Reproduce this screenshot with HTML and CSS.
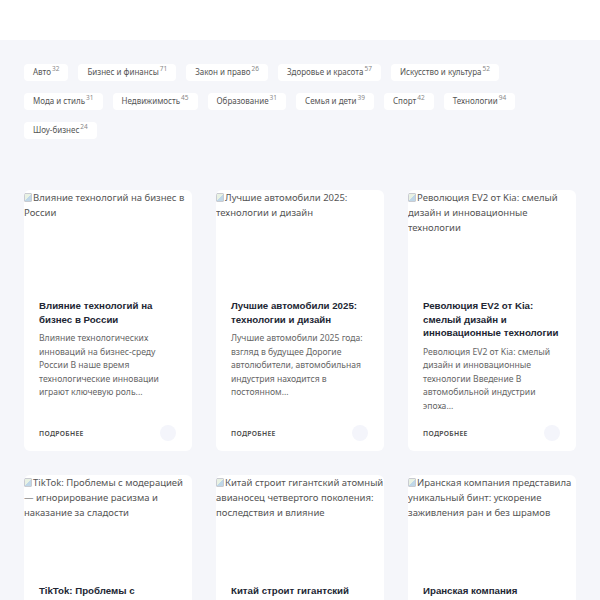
FILE: index.html
```html
<!DOCTYPE html>
<html lang="ru">
<head>
    <meta charset="UTF-8">
    <meta name="viewport" content="width=device-width, initial-scale=1.0">
    <title>Новости</title>
    <link rel="stylesheet" href="styles.css">
</head>
<body>
    <header class="topbar"></header>

    <main class="page">
        <div class="tags">
            <a class="tag" href="#">Авто<sup>32</sup></a>
            <a class="tag" href="#">Бизнес и финансы<sup>71</sup></a>
            <a class="tag" href="#">Закон и право<sup>26</sup></a>
            <a class="tag" href="#">Здоровье и красота<sup>57</sup></a>
            <a class="tag" href="#">Искусство и культура<sup>52</sup></a>
            <a class="tag" href="#">Мода и стиль<sup>31</sup></a>
            <a class="tag" href="#">Недвижимость<sup>45</sup></a>
            <a class="tag" href="#">Образование<sup>31</sup></a>
            <a class="tag" href="#">Семья и дети<sup>39</sup></a>
            <a class="tag" href="#">Спорт<sup>42</sup></a>
            <a class="tag" href="#">Технологии<sup>94</sup></a>
            <a class="tag" href="#">Шоу-бизнес<sup>24</sup></a>
        </div>

        <div class="grid">
            <article class="card">
                <div class="card-img"><span class="broken"></span>Влияние технологий на бизнес в России</div>
                <div class="card-body">
                    <h3>Влияние технологий на бизнес в России</h3>
                    <p>Влияние технологических инноваций на бизнес-среду России В наше время технологические инновации играют ключевую роль...</p>
                    <div class="card-foot">
                        <a href="#" class="more">Подробнее</a>
                        <span class="dot"></span>
                    </div>
                </div>
            </article>
            <article class="card">
                <div class="card-img"><span class="broken"></span>Лучшие автомобили 2025: технологии и дизайн</div>
                <div class="card-body">
                    <h3>Лучшие автомобили 2025: технологии и дизайн</h3>
                    <p>Лучшие автомобили 2025 года: взгляд в будущее Дорогие автолюбители, автомобильная индустрия находится в постоянном...</p>
                    <div class="card-foot">
                        <a href="#" class="more">Подробнее</a>
                        <span class="dot"></span>
                    </div>
                </div>
            </article>
            <article class="card">
                <div class="card-img"><span class="broken"></span>Революция EV2 от Kia: смелый дизайн и инновационные технологии</div>
                <div class="card-body">
                    <h3>Революция EV2 от Kia: смелый дизайн и инновационные технологии</h3>
                    <p>Революция EV2 от Kia: смелый дизайн и инновационные технологии Введение В автомобильной индустрии эпоха...</p>
                    <div class="card-foot">
                        <a href="#" class="more">Подробнее</a>
                        <span class="dot"></span>
                    </div>
                </div>
            </article>
            <article class="card">
                <div class="card-img"><span class="broken"></span>TikTok: Проблемы с модерацией — игнорирование расизма и наказание за сладости</div>
                <div class="card-body">
                    <h3>TikTok: Проблемы с модерацией — игнорирование расизма и наказание за сладости</h3>
                    <p>TikTok: Проблемы с модерацией...</p>
                    <div class="card-foot">
                        <a href="#" class="more">Подробнее</a>
                        <span class="dot"></span>
                    </div>
                </div>
            </article>
            <article class="card">
                <div class="card-img"><span class="broken"></span>Китай строит гигантский атомный авианосец четвертого поколения: последствия и влияние</div>
                <div class="card-body">
                    <h3>Китай строит гигантский атомный авианосец четвертого поколения</h3>
                    <p>Китай строит гигантский атомный авианосец...</p>
                    <div class="card-foot">
                        <a href="#" class="more">Подробнее</a>
                        <span class="dot"></span>
                    </div>
                </div>
            </article>
            <article class="card">
                <div class="card-img"><span class="broken"></span>Иранская компания представила уникальный бинт: ускорение заживления ран и без шрамов</div>
                <div class="card-body">
                    <h3>Иранская компания представила уникальный бинт</h3>
                    <p>Иранская компания представила уникальный бинт...</p>
                    <div class="card-foot">
                        <a href="#" class="more">Подробнее</a>
                        <span class="dot"></span>
                    </div>
                </div>
            </article>
        </div>
    </main>
</body>
</html>
```

FILE: styles.css
```css
body {
    margin: 0;
    font-family: 'Noto Sans', 'Open Sans', sans-serif;
    background: #f5f6fa;
    color: #333;
}
.topbar {
    height: 40px;
    background: #fff;
}
.page {
    padding: 24px 24px 40px;
}
.tags {
    display: flex;
    flex-wrap: wrap;
    gap: 12px 10px;
    margin-bottom: 51px;
}
.tag {
    display: inline-block;
    background: #fff;
    border-radius: 4px;
    padding: 3px 9px 4px;
    font-size: 8px;
    line-height: 10px;
    color: #555;
    text-decoration: none;
}
.tag sup {
    font-size: 6.5px;
    color: #888;
    margin-left: 1px;
    vertical-align: 4px;
    line-height: 0;
}
.grid {
    display: grid;
    grid-template-columns: repeat(3, 1fr);
    gap: 24px;
}
.card {
    background: #fff;
    border-radius: 6px;
    display: flex;
    flex-direction: column;
    overflow: hidden;
}
.card-img {
    height: 96px;
    font-size: 9.5px;
    line-height: 15px;
    color: #555;
}
.broken {
    display: inline-block;
    width: 8px;
    height: 9px;
    margin-right: 1px;
    border: 1px solid #c9cbd1;
    border-radius: 1px;
    background: linear-gradient(135deg, #e9f2e4 0 50%, #bfd7e8 50%);
    vertical-align: -1px;
    box-sizing: border-box;
}
.card-body {
    flex: 1;
    display: flex;
    flex-direction: column;
    padding: 13px 15px 10px;
}
.card-body h3 {
    margin: 0 0 6px;
    font-family: 'Liberation Sans', Arial, sans-serif;
    font-size: 9.7px;
    line-height: 13.5px;
    font-weight: bold;
    color: #222633;
}
.card-body p {
    margin: 0;
    font-size: 8.6px;
    line-height: 13.5px;
    color: #666;
}
.card-foot {
    margin-top: auto;
    padding-top: 12px;
    display: flex;
    align-items: center;
    justify-content: space-between;
}
.more {
    font-size: 6.8px;
    font-weight: 600;
    letter-spacing: 0.3px;
    text-transform: uppercase;
    color: #4a4a4a;
    text-decoration: none;
}
.dot {
    width: 16px;
    height: 16px;
    margin-right: 1px;
    border-radius: 50%;
    background: #f4f5fb;
}
```
